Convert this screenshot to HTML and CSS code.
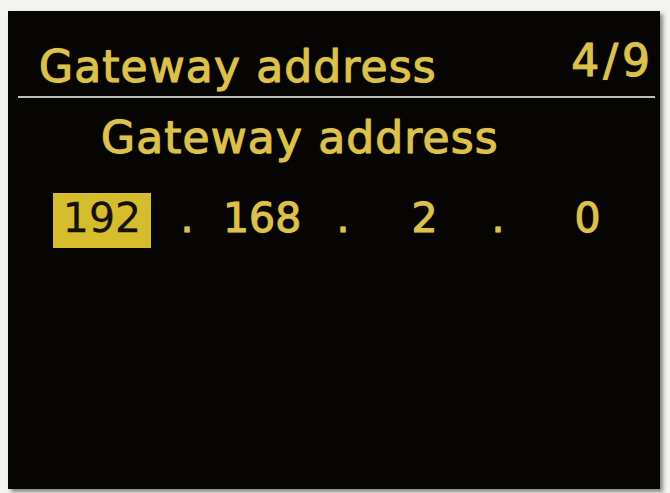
FILE: index.html
```html
<!DOCTYPE html>
<html lang="en">
<head>
<meta charset="utf-8">
<title>Gateway address</title>
<link rel="stylesheet" href="styles.css">
</head>
<body>
<div class="screen">
  <div class="header">
    <span class="title">Gateway address</span>
    <span class="page">4/9</span>
  </div>
  <div class="rule"></div>
  <div class="subtitle">Gateway address</div>
  <div class="ip">
    <span class="octet selected">192</span>
    <span class="dot">.</span>
    <span class="octet">168</span>
    <span class="dot">.</span>
    <span class="octet">2</span>
    <span class="dot">.</span>
    <span class="octet">0</span>
  </div>
</div>
</body>
</html>
```
FILE: styles.css
```css
html, body {
  margin: 0;
  padding: 0;
}
body {
  background: #f3f3f2;
  padding: 11px 10px 4px 8px;
  font-family: "DejaVu Sans", sans-serif;
}
.screen {
  width: 652px;
  height: 478px;
  background: #070504;
  box-shadow: 3px 3px 4px rgba(0, 0, 0, 0.45);
  color: #dcc24c;
  overflow: hidden;
}
.header {
  display: flex;
  justify-content: space-between;
  align-items: flex-start;
  padding: 30px 10px 0 31px;
  font-size: 44px;
  line-height: 52px;
}
.title, .subtitle, .page, .octet, .dot {
  -webkit-text-stroke: 1px #dcc24c;
  text-shadow: 0 0 2px rgba(220, 190, 70, 0.45);
}
.title, .subtitle {
  letter-spacing: 1.1px;
}
.page {
  line-height: 40px;
  letter-spacing: 4px;
  margin-right: -4px;
}
.rule {
  height: 2px;
  margin: 3px 5px 0 10px;
  background: #bcbfba;
}
.subtitle {
  margin-top: 14px;
  padding-left: 93px;
  font-size: 44px;
  line-height: 52px;
}
.ip {
  margin-top: 29px;
  padding-left: 45px;
  display: grid;
  grid-template-columns: 98px 72px 78px 84px 79px 68px 111px;
  font-size: 41px;
  line-height: 50px;
}
.ip > span {
  text-align: center;
  padding-bottom: 5px;
}
.selected {
  background: #d6bd2e;
  color: #15110a;
  -webkit-text-stroke: 0.3px #15110a;
  text-shadow: none;
}
```
